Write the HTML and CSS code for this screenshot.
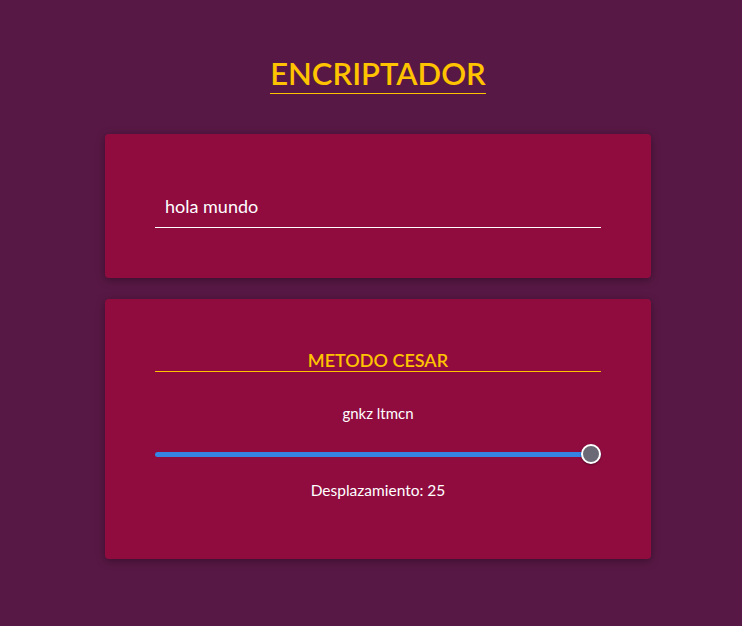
FILE: index.html
```html
<!DOCTYPE html>
<html lang="es">
<head>
<meta charset="utf-8">
<title>Encriptador</title>
<link rel="stylesheet" href="styles.css">
</head>
<body>
<main class="page">
  <header class="header">
    <h1 class="title">ENCRIPTADOR</h1>
  </header>
  <section class="card card-input">
    <input class="text-input" type="text" value="hola mundo">
  </section>
  <section class="card card-method">
    <h2 class="method-title">METODO CESAR</h2>
    <p class="output">gnkz ltmcn</p>
    <input class="slider" type="range" min="0" max="25" value="25">
    <p class="shift">Desplazamiento: 25</p>
  </section>
</main>
</body>
</html>
```

FILE: styles.css
```css
html, body {
  margin: 0;
  padding: 0;
}
body {
  background: #581845;
  font-family: Lato, "Open Sans", sans-serif;
  color: #ffffff;
  width: 742px;
  height: 626px;
  overflow: hidden;
  box-sizing: border-box;
  padding-left: 14px;
}
.page {
  width: 546px;
  margin: 0 auto;
  padding-top: 55px;
  display: flex;
  flex-direction: column;
}
.header {
  display: flex;
  justify-content: center;
  margin-bottom: 40px;
}
.title {
  margin: 0;
  font-size: 31px;
  font-weight: 600;
  color: #ffc300;
  line-height: 36px;
  border-bottom: 1px solid #ffc300;
  padding-bottom: 2px;
}
.card {
  background: #900c3f;
  border-radius: 4px;
  box-shadow: 0 2px 8px rgba(0,0,0,0.35);
  padding: 50px;
  display: flex;
  flex-direction: column;
}
.card-input {
  margin-bottom: 21px;
}
.text-input {
  height: 44px;
  box-sizing: border-box;
  background: transparent;
  border: none;
  border-bottom: 1px solid #ffffff;
  color: #ffffff;
  font-family: inherit;
  font-size: 18px;
  padding: 0 10px;
  outline: none;
}
.method-title {
  margin: 0;
  text-align: center;
  font-size: 18px;
  font-weight: 600;
  color: #ffc300;
  line-height: 22px;
  border-bottom: 1px solid #ffc300;
}
.output {
  margin: 29px 0 0;
  text-align: center;
  font-size: 15px;
  line-height: 24px;
}
.slider {
  -webkit-appearance: none;
  appearance: none;
  margin: 18px 0 0;
  width: 100%;
  height: 22px;
  background: transparent;
}
.slider::-webkit-slider-runnable-track {
  height: 5px;
  background: #3584e4;
  border-radius: 3px;
}
.slider::-webkit-slider-thumb {
  -webkit-appearance: none;
  width: 20px;
  height: 20px;
  margin-top: -7.5px;
  border-radius: 50%;
  background: #6b6975;
  border: 2px solid #ffffff;
  box-sizing: border-box;
  box-shadow: 0 1px 2px rgba(0,0,0,0.4);
}
.shift {
  margin: 14px 0 8px;
  text-align: center;
  font-size: 15.5px;
  line-height: 22px;
}
```
